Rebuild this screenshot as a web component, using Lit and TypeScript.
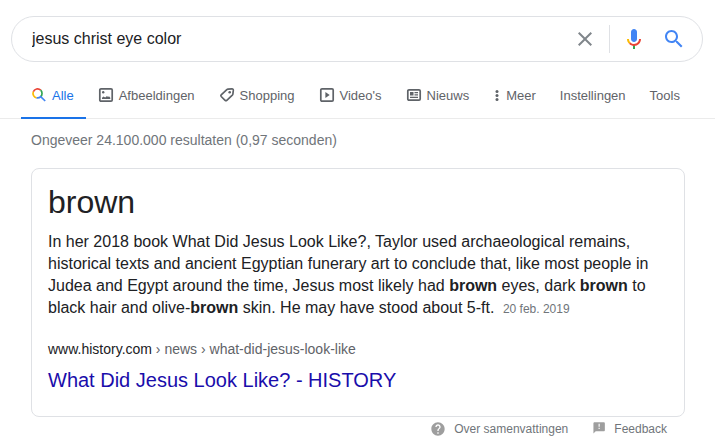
import { LitElement, html, css, svg, type SVGTemplateResult } from "lit";
import { customElement, state } from "lit/decorators.js";

interface Tab {
  label: string;
  icon?: SVGTemplateResult;
  narrow?: boolean;
}

const lens = svg`
  <g fill="none" stroke-width="1.7">
    <path stroke="#ea4335" d="M2.300 4.800A4.500 4.500 0 0 1 9.700 3.200"/>
    <path stroke="#34a853" d="M9.700 3.200A4.500 4.500 0 0 1 9.700 9.600"/>
    <path stroke="#fbbc04" d="M2.300 4.800A4.500 4.500 0 0 0 5.600 10.800"/>
    <path stroke="#4285f4" d="M5.600 10.800A4.500 4.500 0 0 0 9.700 9.600L14.200 14"/>
  </g>`;

const picture = svg`
  <rect x="1.800" y="1.800" width="12.400" height="12.400" rx="1.200" fill="none" stroke="currentColor" stroke-width="1.700"/>
  <circle cx="5.200" cy="5.300" r="1.200"/>
  <path d="M4 12v-1.200l1.500-1.300 1.700 1 1.800-1.500 1 1 1-.800 1.300 1.600V12z"/>`;

const tag = svg`
  <path fill="none" stroke="currentColor" stroke-width="1.700" stroke-linejoin="round"
    d="M9 2.200 13 1.900Q14.400 1.900 14.300 3.400L13.900 7Q13.800 7.700 13.300 8.200L7.800 13.300Q6.900 14 6.100 13.300L2.200 9.500Q1.500 8.700 2.200 7.900L7.800 2.700Q8.300 2.300 9 2.200z"/>
  <circle cx="10.700" cy="5.300" r="1.300"/>`;

const video = svg`
  <rect x="1.800" y="1.800" width="12.400" height="12.400" rx="1.200" fill="none" stroke="currentColor" stroke-width="1.700"/>
  <path d="M6.400 5v6l4.300-3z"/>`;

const news = svg`
  <rect x="1.800" y="2.800" width="12.400" height="10.400" rx="1.200" fill="none" stroke="currentColor" stroke-width="1.700"/>
  <path d="M4 5h3.500v3.500H4zM8.500 5H12v1.300H8.500zM8.500 7.300H12v1.300H8.500zM4 9.700h8V11H4z"/>`;

const dots = svg`
  <circle cx="4" cy="4.500" r="1.500"/>
  <circle cx="4" cy="8.500" r="1.500"/>
  <circle cx="4" cy="12.500" r="1.500"/>`;

@customElement("app-root")
export class AppRoot extends LitElement {
  @state() private query = "jesus christ eye color";

  private tabs: Tab[] = [
    { label: "Alle", icon: lens },
    { label: "Afbeeldingen", icon: picture },
    { label: "Shopping", icon: tag },
    { label: "Video's", icon: video },
    { label: "Nieuws", icon: news },
    { label: "Meer", icon: dots, narrow: true },
    { label: "Instellingen" },
    { label: "Tools" },
  ];

  static styles = css`
    :host {
      display: block;
      background: #fff;
      color: #202124;
      font-family: "Liberation Sans", Arial, sans-serif;
      font-size: 14px;
    }
    * {
      box-sizing: border-box;
    }
    a {
      color: inherit;
      text-decoration: none;
    }
    svg {
      display: block;
      flex: none;
    }
    .search {
      display: flex;
      align-items: center;
      height: 46px;
      margin: 16px 12px 0 11px;
      padding: 0 16px 0 20px;
      border: 1px solid #dfe1e5;
      border-radius: 24px;
    }
    .query {
      flex: 1;
      min-width: 0;
      padding: 0;
      border: 0;
      outline: 0;
      background: none;
      color: #202124;
      font: inherit;
      font-size: 16px;
    }
    .tool {
      padding: 0;
      border: 0;
      background: none;
      cursor: pointer;
    }
    .voice {
      margin-left: 12px;
      padding-left: 12px;
      border-left: 1px solid #dfe1e5;
      height: 28px;
    }
    .submit {
      margin-left: 16px;
    }
    .tabs {
      display: flex;
      gap: 2px;
      margin-top: 12px;
      padding-left: 21px;
      border-bottom: 1px solid #ebebeb;
      color: #5f6368;
      font-size: 13px;
      line-height: 18px;
      white-space: nowrap;
    }
    .tab {
      display: flex;
      gap: 5px;
      height: 45px;
      margin-bottom: -1px;
      padding: 13px 12px 0 10px;
    }
    .tab svg {
      fill: currentColor;
    }
    .active {
      color: #1a73e8;
      border-bottom: 2px solid #1a73e8;
    }
    .results {
      padding: 11px 30px 0 31px;
    }
    .stats {
      color: #70757a;
      line-height: 20px;
    }
    .card {
      margin-top: 18px;
      padding: 16px 16px 23px;
      border: 1px solid #dfe1e5;
      border-radius: 8px;
    }
    h1,
    h2,
    p {
      margin: 0;
      font-weight: normal;
    }
    .answer {
      font-size: 32px;
      line-height: 34px;
    }
    .snippet {
      margin-top: 12px;
      font-size: 16px;
      line-height: 22px;
    }
    .date {
      margin-left: 4px;
      color: #70757a;
      font-size: 12px;
    }
    .source {
      display: block;
      margin-top: 20px;
    }
    .url {
      line-height: 18px;
    }
    .path {
      color: #5f6368;
    }
    .title {
      margin-top: 9px;
      color: #1a0dab;
      font-size: 20px;
      line-height: 26px;
    }
    .notes {
      display: flex;
      justify-content: flex-end;
      gap: 22px;
      padding: 4px 18px 0 0;
      color: #70757a;
      font-size: 12px;
      line-height: 16px;
    }
    .note {
      display: flex;
      gap: 8px;
    }
    .note svg {
      fill: #9e9e9e;
    }
  `;

  private onInput(e: Event) {
    this.query = (e.target as HTMLInputElement).value;
  }

  render() {
    return html`
      <form class="search" role="search" @submit=${(e: Event) => e.preventDefault()}>
        <input class="query" type="text" aria-label="Zoeken" .value=${this.query} @input=${this.onInput} />
        <button class="tool" type="button" aria-label="Wissen" @click=${() => (this.query = "")}>
          <svg width="24" height="24" viewBox="0 0 24 24" fill="#80868b">
            <path d="M19 6.410L17.590 5 12 10.590 6.410 5 5 6.410 10.590 12 5 17.590 6.410 19 12 13.410 17.590 19 19 17.590 13.410 12z"/>
          </svg>
        </button>
        <button class="tool voice" type="button" aria-label="Gesproken zoekopdracht">
          <svg width="24" height="24" viewBox="0 0 24 24">
            <path fill="#4285f4" d="M12 15c1.660 0 3-1.310 3-2.970V5.010C15 3.340 13.660 2 12 2S9 3.340 9 5.010v7.020C9 13.690 10.340 15 12 15z"/>
            <path fill="#34a853" d="M11 18.080h2V22h-2z"/>
            <path fill="#fbbc04" d="M7.050 16.870C5.780 15.590 5 13.910 5 12h2c0 1.380.560 2.560 1.470 3.430v.020l-1.420 1.420z"/>
            <path fill="#ea4335" d="M12 16.930a4.970 5.250 0 0 1-3.540-1.550l-1.410 1.490c1.260 1.340 3.020 2.130 4.950 2.130 3.870 0 6.990-2.920 6.990-7h-1.990c0 2.920-2.240 4.930-5 4.930z"/>
          </svg>
        </button>
        <button class="tool submit" type="submit" aria-label="Zoeken">
          <svg width="24" height="24" viewBox="0 0 24 24" fill="#4285f4">
            <path d="M15.500 14h-.790l-.280-.270C15.410 12.590 16 11.110 16 9.500 16 5.910 13.090 3 9.500 3S3 5.910 3 9.500 5.910 16 9.500 16c1.610 0 3.090-.590 4.230-1.570l.270.280v.790l5 4.990L20.490 19l-4.990-5zm-6 0C7.010 14 5 11.990 5 9.500S7.010 5 9.500 5 14 7.010 14 9.500 11.990 14 9.500 14z"/>
          </svg>
        </button>
      </form>

      <nav class="tabs">
        ${this.tabs.map(
          (t, i) => html`<a class=${i === 0 ? "tab active" : "tab"} href="#">
            ${t.icon
              ? html`<svg width=${t.narrow ? 8 : 16} height="16" viewBox=${t.narrow ? "0 0 8 16" : "0 0 16 16"} aria-hidden="true">${t.icon}</svg>`
              : null}<span>${t.label}</span></a>`
        )}
      </nav>

      <main class="results">
        <div class="stats">Ongeveer 24.100.000 resultaten (0,97 seconden)</div>
        <section class="card">
          <h1 class="answer">brown</h1>
          <p class="snippet">
            In her 2018 book What Did Jesus Look Like?, Taylor used archaeological remains,
            historical texts and ancient Egyptian funerary art to conclude that, like most people in
            Judea and Egypt around the time, Jesus most likely had <b>brown</b> eyes, dark
            <b>brown</b> to black hair and olive-<b>brown</b> skin. He may have stood about 5-ft.
            <span class="date">20 feb. 2019</span>
          </p>
          <a class="source" href="#">
            <div class="url">www.history.com<span class="path"> › news › what-did-jesus-look-like</span></div>
            <h2 class="title">What Did Jesus Look Like? - HISTORY</h2>
          </a>
        </section>
        <footer class="notes">
          <a class="note" href="#">
            <svg width="16" height="16" viewBox="0 0 24 24" aria-hidden="true">
              <path d="M12 2C6.480 2 2 6.480 2 12s4.480 10 10 10 10-4.480 10-10S17.520 2 12 2zm1 17h-2v-2h2v2zm2.070-7.750l-.900.920C13.450 12.900 13 13.500 13 15h-2v-.500c0-1.100.450-2.100 1.170-2.830l1.240-1.260c.370-.360.590-.860.590-1.410 0-1.100-.900-2-2-2s-2 .900-2 2H8c0-2.210 1.790-4 4-4s4 1.790 4 4c0 .880-.360 1.680-.930 2.250z"/>
            </svg>
            <span>Over samenvattingen</span>
          </a>
          <a class="note" href="#">
            <svg width="16" height="16" viewBox="-4 0 28 28" aria-hidden="true">
              <path d="M20 2H4c-1.100 0-2 .900-2 2v18l4-4h14c1.100 0 2-.900 2-2V4c0-1.100-.900-2-2-2zm-7 12h-2v-2h2v2zm0-4h-2V5h2v5z"/>
            </svg>
            <span>Feedback</span>
          </a>
        </footer>
      </main>
    `;
  }
}
